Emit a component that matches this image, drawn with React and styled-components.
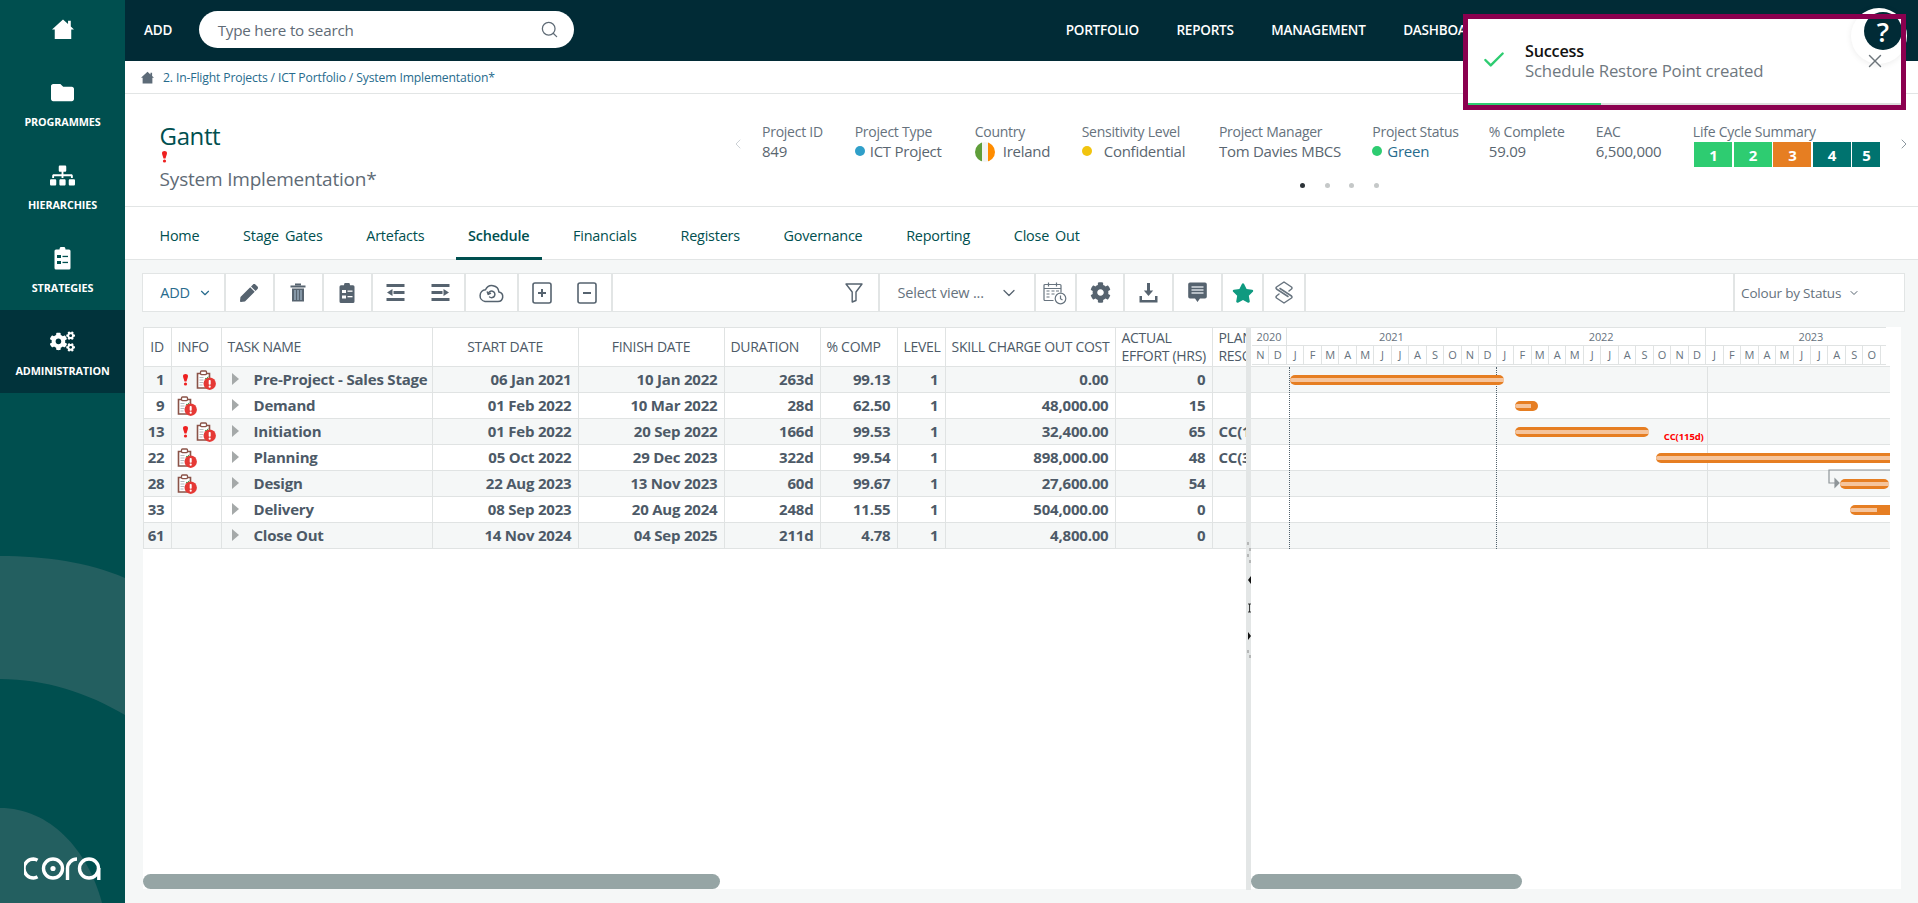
import React from 'react'
import styled, { createGlobalStyle } from 'styled-components'
import { FaFolder, FaSitemap, FaCogs, FaPen, FaCog, FaStar } from 'react-icons/fa'
import { Search, X, Check, ChevronDown, ChevronLeft, ChevronRight } from 'lucide-react'

const GlobalStyle = createGlobalStyle`
  html, body { margin: 0; padding: 0; background: #f5f7f7; }
  body { font-family: "Open Sans", "Noto Sans", sans-serif; overflow: hidden; }
  * { box-sizing: border-box; }
`

const Page = styled.div`
  width: 1918px;
  height: 903px;
  display: flex;
  overflow: hidden;
  position: relative;
`

/* sidebar */
const Sidebar = styled.aside`
  flex: 0 0 125px;
  background: #004f4f;
  position: relative;
  overflow: hidden;
`
const SideArt = styled.svg`
  position: absolute;
  left: 0;
  top: 0;
`
const SideHome = styled.div`
  height: 61px;
  display: flex;
  align-items: center;
  justify-content: center;
  color: #fff;
  position: relative;
  padding-bottom: 3px;
`
const SideItem = styled.div`
  height: 83px;
  padding-top: 21px;
  display: flex;
  flex-direction: column;
  align-items: center;
  color: #fff;
  position: relative;
  background: ${p => (p.$active ? '#01333b' : 'transparent')};
`
const SideIcon = styled.div`
  height: 20px;
  display: flex;
  align-items: center;
  justify-content: center;
`
const SideLabel = styled.span`
  margin-top: 13px;
  font-size: 10.8px;
  line-height: 14px;
  font-weight: 700;
  letter-spacing: -0.1px;
`
const LogoWrap = styled.div`
  position: absolute;
  left: 24px;
  bottom: 23px;
  line-height: 0;
`

/* main column */
const Main = styled.main`
  flex: 1;
  min-width: 0;
  display: flex;
  flex-direction: column;
`
const TopBar = styled.header`
  height: 61px;
  flex: none;
  background: #012b36;
  display: flex;
  align-items: center;
  padding: 0 0 2px 19px;
  color: #fff;
  overflow: hidden;
`
const TopAdd = styled.span`
  font-size: 13.5px;
  font-weight: 600;
  letter-spacing: -0.2px;
`
const SearchPill = styled.div`
  margin-left: 26.5px;
  width: 375px;
  height: 37px;
  background: #fff;
  border-radius: 19px;
  display: flex;
  align-items: center;
  justify-content: space-between;
  padding: 0 15px 0 19px;
  font-size: 15.2px;
  color: #5f6b76;
  letter-spacing: -0.2px;
`
const TopNav = styled.nav`
  margin-left: 492px;
  display: flex;
  gap: 37.5px;
  font-size: 13.5px;
  font-weight: 600;
  letter-spacing: -0.2px;
  white-space: nowrap;
`
const Breadcrumb = styled.div`
  height: 33px;
  flex: none;
  background: #fff;
  padding: 1px 0 0 16px;
  display: flex;
  align-items: center;
  gap: 9px;
  font-size: 12.2px;
  letter-spacing: -0.15px;
  color: #276b8d;
  border-bottom: 1px solid #e2e5e5;
  svg { color: #5d6b78; }
`
const ProjectHeader = styled.section`
  height: 113px;
  flex: none;
  background: #fff;
  border-bottom: 1px solid #e2e5e5;
  display: flex;
`
const TitleBlock = styled.div`
  flex: 0 0 605px;
  padding: 27px 0 0 34.6px;
`
const Title = styled.div`
  font-size: 24px;
  line-height: 30px;
  color: #004f4f;
  letter-spacing: -0.4px;
`
const TitleFlag = styled.div`
  height: 14px;
  padding-left: 1px;
  line-height: 0;
`
const SubTitle = styled.div`
  font-size: 19px;
  line-height: 28px;
  color: #5f6b76;
  letter-spacing: -0.2px;
`
const CarouselArrow = styled.div`
  flex: none;
  width: 16px;
  margin-top: 40px;
  height: 20px;
  color: ${p => p.$color};
  display: flex;
  align-items: center;
  justify-content: center;
`
const Carousel = styled.div`
  flex: none;
  margin-left: 16px;
  padding-top: 28px;
  width: 1121px;
  margin-right: 13px;
`
const InfoGrid = styled.div`
  display: grid;
  grid-template-columns: 92.7px 120px 107px 137.2px 153.4px 116.6px 107px 97px 190px;
`
const InfoLabel = styled.div`
  font-size: 14px;
  line-height: 20px;
  color: #66727d;
  letter-spacing: -0.25px;
  white-space: nowrap;
`
const InfoValue = styled.div`
  font-size: 15px;
  line-height: 18px;
  height: 20px;
  color: ${p => p.$color || '#5a6670'};
  letter-spacing: -0.25px;
  display: flex;
  align-items: flex-start;
  white-space: nowrap;
`
const Dot = styled.span`
  width: 10px;
  height: 10px;
  margin-top: 4px;
  border-radius: 50%;
  background: ${p => p.$color};
  margin-right: ${p => p.$gap}px;
  flex: none;
`
const Flag = styled.span`
  width: 20px;
  height: 20px;
  border-radius: 50%;
  margin-right: 8px;
  background: linear-gradient(90deg, #5f9e3a 0 34%, #f3f3f3 34% 66%, #ff8c00 66%);
`
const LifeCycle = styled.div`
  display: flex;
  gap: 1.5px;
  margin: 0 0 0 1.6px;
  height: 25px;
`
const LifeBox = styled.span`
  width: ${p => p.$w}px;
  height: 25px;
  background: ${p => p.$color};
  color: #fff;
  font-size: 15px;
  font-weight: 700;
  display: flex;
  align-items: center;
  justify-content: center;
`
const Dots = styled.div`
  display: flex;
  gap: 19.6px;
  margin: 16px 0 0 538px;
`
const PageDot = styled.span`
  width: 5px;
  height: 5px;
  border-radius: 50%;
  background: ${p => (p.$on ? '#2c3338' : '#c5c8c8')};
`
const Tabs = styled.nav`
  height: 53px;
  flex: none;
  background: #fff;
  border-bottom: 1px solid #e2e5e5;
  display: flex;
  padding-left: 22px;
  gap: 18.7px;
  word-spacing: 2.5px;
`
const Tab = styled.a`
  height: 53px;
  padding: 3px 12.5px 0;
  font-size: 14.4px;
  letter-spacing: -0.2px;
  line-height: 52px;
  color: #004f4f;
  font-weight: ${p => (p.$active ? 600 : 400)};
  border-bottom: 3px solid ${p => (p.$active ? '#004f4f' : 'transparent')};
`
const Content = styled.div`
  flex: 1;
  min-height: 0;
  padding: 13px 13.5px 0 16.5px;
  display: flex;
  flex-direction: column;
`

/* toolbar */
const Toolbar = styled.div`
  height: 39px;
  flex: none;
  display: flex;
  background: #fff;
  border: 1px solid #e2e5e5;
  color: #56636f;
`
const ToolCell = styled.div`
  flex: 0 0 ${p => p.$w}px;
  border-right: ${p => (p.$last ? 0 : 2)}px solid #e2e5e5;
  display: flex;
  align-items: center;
  justify-content: ${p => p.$justify || 'center'};
  gap: ${p => p.$gap || 0}px;
  padding: ${p => p.$pad || 0};
  white-space: nowrap;
`
const AddLink = styled.span`
  color: #276b8d;
  font-size: 14.5px;
  letter-spacing: -0.2px;
`
const SelectText = styled.span`
  font-size: ${p => p.$size || 14.5}px;
  letter-spacing: -0.2px;
  color: #66727d;
`

/* schedule panel */
const Panel = styled.div`
  margin: 14.5px 3.5px 0 1px;
  height: 562px;
  flex: none;
  background: #fff;
  display: flex;
`
const Pane = styled.div`
  display: flex;
  flex-direction: column;
  overflow: hidden;
  flex: ${p => (p.$grow ? 1 : `0 0 ${p.$w}px`)};
`
const Grid = styled.table`
  table-layout: fixed;
  border-collapse: collapse;
  width: 1103px;
  color: #4d5a67;
`
const HeadCell = styled.th`
  height: 39.5px;
  padding: 0 ${p => (p.$center ? 0 : 6)}px;
  text-align: ${p => (p.$center ? 'center' : 'left')};
  font-weight: 400;
  font-size: 14px;
  line-height: 18px;
  letter-spacing: -0.3px;
  border: 1px solid #e0e3e3;
  overflow: hidden;
  white-space: nowrap;
`
const Row = styled.tr`
  background: ${p => (p.$odd ? '#f5f7f7' : '#fff')};
`
const Cell = styled.td`
  height: 26px;
  padding: 0 ${p => (p.$left ? 0 : 6)}px 2px ${p => (p.$left ? 6 : 0)}px;
  text-align: ${p => (p.$left ? 'left' : 'right')};
  font-size: 15px;
  font-weight: 700;
  letter-spacing: -0.2px;
  border: 1px solid #e0e3e3;
  overflow: hidden;
  white-space: nowrap;
`
const InfoCell = styled.td`
  height: 26px;
  padding: 0;
  border: 1px solid #e0e3e3;
`
const InfoIcons = styled.div`
  display: flex;
  align-items: center;
  gap: ${p => (p.$both ? 7 : 0)}px;
  padding-left: ${p => (p.$both ? 10 : 5)}px;
`
const TaskCell = styled.td`
  height: 26px;
  padding: 0 0 2px;
  border: 1px solid #e0e3e3;
  font-size: 15px;
  font-weight: 700;
  letter-spacing: -0.2px;
  white-space: nowrap;
  overflow: hidden;
`
const TaskInner = styled.div`
  display: flex;
  align-items: center;
  gap: 15px;
  padding-left: 10px;
`
const Caret = styled.span`
  flex: none;
  width: 0;
  height: 0;
  border-left: 7px solid #a5a9a9;
  border-top: 6px solid transparent;
  border-bottom: 6px solid transparent;
`
const ScrollThumb = styled.div`
  flex: none;
  margin-top: auto;
  width: ${p => p.$w}px;
  height: 15px;
  background: #96a5a5;
  border-radius: 8px;
`
const Splitter = styled.div`
  flex: 0 0 5.5px;
  height: 563px;
  background: #e3e6e6;
  position: relative;
`
const SplitMarks = styled.svg`
  position: absolute;
  left: 1px;
  top: 215px;
`

/* gantt */
const Timeline = styled.div`
  width: 635px;
  padding-left: 1px;
  color: #66727d;
  border-top: 1px solid #e0e3e3;
  height: 38px;
  flex: none;
  overflow: hidden;
`
const TimeRow = styled.div`
  display: flex;
  height: ${p => p.$h}px;
  border-bottom: 1px solid #e0e3e3;
`
const TimeCell = styled.div`
  flex: 0 0 ${p => p.$w}px;
  border-right: 1px solid #e0e3e3;
  font-size: 11px;
  letter-spacing: -0.1px;
  display: flex;
  align-items: center;
  justify-content: center;
`
const GanttBody = styled.div`
  width: 638.5px;
  position: relative;
  overflow: hidden;
  margin-top: 1.5px;
  border-top: 1px solid #e0e3e3;
`
const GanttRow = styled.div`
  height: 26px;
  border-bottom: 1px solid #e0e3e3;
  background: ${p => (p.$odd ? '#f5f7f7' : '#fff')};
`
const GanttLine = styled.div`
  position: absolute;
  top: 0;
  bottom: 0;
  width: 0;
  border-left: 1px ${p => (p.$dotted ? 'dotted #50606c' : 'solid #dfe2e2')};
`
const Bar = styled.div`
  position: absolute;
  height: 10px;
  background: #e67e22;
  border-radius: ${p => (p.$open ? '5px 0 0 5px' : '5px')};
`
const BarFill = styled.div`
  position: absolute;
  left: 0;
  top: 3px;
  height: 4px;
  background: #f5c49c;
  border-radius: 2px 0 0 2px;
`
const BarNote = styled.span`
  position: absolute;
  left: 412.7px;
  top: 63px;
  font-size: 9.5px;
  font-weight: 700;
  color: #f00;
  letter-spacing: -0.1px;
`
const Link = styled.svg`
  position: absolute;
  left: 577px;
  top: 102px;
`

/* toast */
const Toast = styled.div`
  position: absolute;
  left: 1463px;
  top: 14px;
  width: 443px;
  height: 96px;
  background: #fff;
  z-index: 5;
  display: flex;
  align-items: flex-start;
  padding: 27px 0 0 17.5px;
`
const ToastFrame = styled.div`
  position: absolute;
  left: 1463px;
  top: 14px;
  width: 443px;
  height: 96px;
  border: 5px solid #8b004f;
  z-index: 7;
  pointer-events: none;
`
const ToastCheck = styled.div`
  flex: none;
  width: 44.5px;
  margin-top: 6px;
  color: #2ecc71;
  line-height: 0;
`
const ToastTitle = styled.div`
  font-size: 16.2px;
  line-height: 20px;
  font-weight: 600;
  letter-spacing: -0.2px;
  color: #111;
`
const ToastText = styled.div`
  font-size: 16.8px;
  line-height: 20px;
  color: #6f7880;
  letter-spacing: -0.2px;
`
const ToastClose = styled.div`
  position: absolute;
  left: 1864px;
  top: 50px;
  color: #6c747a;
  z-index: 8;
  line-height: 0;
`
const ToastProgress = styled.div`
  position: absolute;
  left: 5px;
  right: 5px;
  bottom: 5px;
  height: 2px;
  background: #ddd;
`
const ToastProgressFill = styled.div`
  height: 2px;
  width: 133px;
  background: #2ecc71;
`
const HelpHalo = styled.div`
  position: absolute;
  left: 1851px;
  top: 8px;
  width: 56px;
  height: 56px;
  border-radius: 50%;
  background: #fff;
  box-shadow: 0 1px 6px rgba(0, 0, 0, 0.08);
  z-index: 6;
  display: flex;
  align-items: center;
  justify-content: center;
  padding: 0 0 10px 8px;
`
const HelpButton = styled.div`
  width: 38px;
  height: 38px;
  border-radius: 50%;
  background: #012b36;
  color: #fff;
  font-size: 27px;
  font-weight: 600;
  padding-top: 1px;
  display: flex;
  align-items: center;
  justify-content: center;
`

/* drawn icons */
const HomeIcon = ({ size }) => (
  <svg width={size} height={size} viewBox="0 0 24 24" fill="currentColor">
    <path d="M12 1.500 17.500 6.500V3H20.500V9.200L24 12.500H21V23H3V12.500H0Z" />
  </svg>
)
const Clipboard = ({ color = 'currentColor' }) => (
  <svg width="17" height="23" viewBox="0 0 17 23" fill={color}>
    <path d="M5.500 2.500a3 3 0 0 1 6 0h3.500a1.500 1.500 0 0 1 1.500 1.500v17a1.500 1.500 0 0 1-1.500 1.500h-13a1.500 1.500 0 0 1-1.500-1.500v-17a1.500 1.500 0 0 1 1.500-1.500z" />
    <g fill="#00504f">
      <rect x="3" y="8" width="4" height="3" />
      <rect x="8.500" y="8.800" width="5.500" height="1.300" />
      <rect x="3" y="14" width="4" height="3" />
      <rect x="8.500" y="14.800" width="5.500" height="1.300" />
    </g>
  </svg>
)
const Exclaim = ({ w = 7, h = 12 }) => (
  <svg width={w} height={h} viewBox="0 0 7 12">
    <path d="M3.500 0C5 0 6 .9 6 2.100c0 1.500-1 3.500-1.500 5.400h-2C2 5.600 1 3.600 1 2.100 1 .9 2 0 3.500 0z" fill="#ee2020" />
    <circle cx="3.500" cy="10" r="1.600" fill="#ee2020" />
  </svg>
)
const TaskAlert = () => (
  <svg width="20" height="20" viewBox="0 0 20 20">
    <path d="M1.500 3.500h12v14.500h-12z" fill="#fff" stroke="#8a5348" strokeWidth="1.600" />
    <rect x="4.500" y="1" width="6" height="3.600" rx="1" fill="#fff" stroke="#8a5348" strokeWidth="1.300" />
    <path d="M3.500 7.500h4M3.500 10h4M3.500 12.500h4M3.500 15h3" stroke="#b5bcc0" strokeWidth="1" />
    <path d="M9 8l1.200 1 2-2.400" stroke="#3aa655" strokeWidth="1" fill="none" />
    <circle cx="13.700" cy="13.700" r="6.200" fill="#e53935" />
    <rect x="12.700" y="10" width="2" height="4.800" rx=".8" fill="#fff" />
    <circle cx="13.700" cy="16.700" r="1.100" fill="#fff" />
  </svg>
)
const TrashIcon = () => (
  <svg width="16" height="19" viewBox="0 0 16 19" fill="currentColor">
    <rect x="0.500" y="2.500" width="15" height="2" />
    <rect x="5" y="0.500" width="6" height="2" />
    <path d="M2 5.500h12v13h-12z" fill="currentColor" />
    <path d="M5 7v10M8 7v10M11 7v10" stroke="#9eb3c4" strokeWidth="1.300" />
  </svg>
)
const ClipList = () => (
  <svg width="16" height="20" viewBox="0 0 16 20" fill="currentColor">
    <path d="M5 2.200a3 3 0 0 1 6 0h3a1.500 1.500 0 0 1 1.500 1.500v14.800a1.500 1.500 0 0 1-1.500 1.500h-12a1.500 1.500 0 0 1-1.500-1.500v-14.800a1.500 1.500 0 0 1 1.500-1.500z" />
    <g fill="#fff">
      <rect x="3" y="7" width="4" height="3" />
      <rect x="8.500" y="7.500" width="5" height="1.300" />
      <rect x="3" y="12.500" width="4" height="3" />
      <rect x="8.500" y="13" width="5" height="1.300" />
    </g>
  </svg>
)
const Indent = ({ flip }) => (
  <svg width="19" height="17" viewBox="0 0 19 17" fill="currentColor">
    <rect x="0.500" y="0" width="18" height="3" />
    <rect x="0.500" y="14" width="18" height="3" />
    {flip ? (
      <>
        <rect x="0.500" y="7" width="11" height="3" />
        <path d="M12.500 5l5.500 3.500-5.500 3.500z" />
      </>
    ) : (
      <>
        <rect x="7.500" y="7" width="11" height="3" />
        <path d="M6.500 5l-5.500 3.500 5.500 3.500z" />
      </>
    )}
  </svg>
)
const CloudRestore = () => (
  <svg width="26" height="20" viewBox="0 0 26 20" fill="none" stroke="currentColor" strokeWidth="1.500" strokeLinecap="round">
    <path d="M7 18.500h13a4.800 4.800 0 0 0 .9-9.500A7 7 0 0 0 7.500 6.800 5.900 5.900 0 0 0 7 18.500z" />
    <path d="M10.300 11a3.300 3.300 0 1 1 1.300 3" />
    <path d="M9.300 9l1 2.300 2.200-1" />
  </svg>
)
const SquareSign = ({ plus }) => (
  <svg width="20" height="22" viewBox="0 0 20 22" fill="none" stroke="currentColor">
    <rect x="1" y="1" width="18" height="20" rx="2" strokeWidth="1.600" />
    <path d={plus ? 'M6 11h8M10 7v8' : 'M6 11h8'} strokeWidth="2" />
  </svg>
)
const FunnelIcon = () => (
  <svg width="18" height="20" viewBox="0 0 18 20" fill="none" stroke="#56636f" strokeWidth="1.400" strokeLinejoin="round">
    <path d="M1 1h16l-6 8v8.500l-3.800 1.500V9z" />
  </svg>
)
const CalendarClock = () => (
  <svg width="24" height="24" viewBox="0 0 24 24" fill="none" stroke="#68747f" strokeWidth="1.200">
    <path d="M10.500 19.500h-8.500a1 1 0 0 1-1-1v-14a1 1 0 0 1 1-1h15a1 1 0 0 1 1 1v7" />
    <path d="M1 7.500h17M5.500 1.500v4M13.500 1.500v4M8 3.500h3" />
    <path d="M3.500 10h3M8.500 10h3M13 10h3M3.500 13h3M8.500 13h3M3.500 16h3" />
    <circle cx="17.500" cy="17.500" r="5.300" />
    <path d="M17.500 14.500v3.200l2 1.300" />
  </svg>
)
const DownloadTray = () => (
  <svg width="19" height="20" viewBox="0 0 19 20" fill="currentColor">
    <rect x="8" y="0" width="3" height="8" />
    <path d="M4.800 7.500h9.400l-4.700 5.500z" />
    <path d="M0.500 13h2.500v4h13v-4h2.500v6.500h-18z" />
  </svg>
)
const CommentBox = () => (
  <svg width="19" height="21" viewBox="0 0 19 21" fill="currentColor">
    <path d="M2 0.500h15a1.800 1.800 0 0 1 1.800 1.800v12.400a1.800 1.800 0 0 1-1.800 1.800h-5l-2.500 3.500-2.500-3.500h-5a1.800 1.800 0 0 1-1.800-1.800v-12.400a1.800 1.800 0 0 1 1.800-1.800z" />
    <path d="M3.500 5h12M3.500 8h12M3.500 11h12" stroke="#d7dde2" strokeWidth="1.600" />
  </svg>
)
const Diamonds = () => (
  <svg width="18" height="23" viewBox="0 0 18 23" fill="none" stroke="#68747f" strokeWidth="1.500" strokeLinejoin="round" strokeLinecap="round">
    <path d="M14 10 16.500 8Q17.500 7 16.500 6L9 1 1.500 6Q.5 7 1.500 8L13 15.500" />
    <path d="M4 13 1.500 15Q.5 16 1.500 17L9 22 16.500 17Q17.500 16 16.500 15L5 7.500" />
  </svg>
)
const CoraLogo = () => (
  <svg width="77" height="23" viewBox="0 0 77 23" fill="none" stroke="#fff" strokeWidth="3.400" strokeLinecap="butt">
    <path d="M13.500 3.300A9.500 9.500 0 0 0 9.500 2 9.500 9.500 0 0 0 9.500 21a9.500 9.500 0 0 0 4-1.300" />
    <circle cx="29" cy="11.500" r="9.500" />
    <circle cx="29" cy="11.500" r="2.600" fill="#fff" stroke="none" />
    <path d="M43.500 23V11.500A9.500 9.500 0 0 1 53 2" />
    <circle cx="65" cy="11.500" r="9.500" />
    <path d="M74.800 11v12" />
  </svg>
)

const months = 'JFMAMJJASOND'.split('')
const MONTH = 17.48
const gridCols = [28, 50, 211, 146, 146, 96, 77, 48, 170, 97, 34]

const tasks = [
  { id: 1, flag: true, alert: true, name: 'Pre-Project - Sales Stage', start: '06 Jan 2021', end: '10 Jan 2022', dur: '263d', pct: '99.13', cost: '0.00', hrs: '0', res: '' },
  { id: 9, alert: true, name: 'Demand', start: '01 Feb 2022', end: '10 Mar 2022', dur: '28d', pct: '62.50', cost: '48,000.00', hrs: '15', res: '' },
  { id: 13, flag: true, alert: true, name: 'Initiation', start: '01 Feb 2022', end: '20 Sep 2022', dur: '166d', pct: '99.53', cost: '32,400.00', hrs: '65', res: 'CC(115d)' },
  { id: 22, alert: true, name: 'Planning', start: '05 Oct 2022', end: '29 Dec 2023', dur: '322d', pct: '99.54', cost: '898,000.00', hrs: '48', res: 'CC(322d)' },
  { id: 28, alert: true, name: 'Design', start: '22 Aug 2023', end: '13 Nov 2023', dur: '60d', pct: '99.67', cost: '27,600.00', hrs: '54', res: '' },
  { id: 33, name: 'Delivery', start: '08 Sep 2023', end: '20 Aug 2024', dur: '248d', pct: '11.55', cost: '504,000.00', hrs: '0', res: '' },
  { id: 61, name: 'Close Out', start: '14 Nov 2024', end: '04 Sep 2025', dur: '211d', pct: '4.78', cost: '4,800.00', hrs: '0', res: '' },
]

// x is measured from the left edge of the gantt pane
const bars = [
  { x: 39, w: 213.7, y: 8, fill: 213.7 },
  { x: 264, w: 23, y: 34, fill: 16 },
  { x: 264, w: 133.6, y: 60, fill: 133.6 },
  { x: 405.4, w: 240, y: 86, fill: 240, open: true },
  { x: 589.4, w: 48.200, y: 112, fill: 48.200 },
  { x: 599, w: 50, y: 138, fill: 27, open: true },
]

const tabs = ['Home', 'Stage Gates', 'Artefacts', 'Schedule', 'Financials', 'Registers', 'Governance', 'Reporting', 'Close Out']
const sideItems = [
  { label: 'PROGRAMMES', icon: <FaFolder size={23} /> },
  { label: 'HIERARCHIES', icon: <FaSitemap size={25} /> },
  { label: 'STRATEGIES', icon: <Clipboard color="#fff" /> },
  { label: 'ADMINISTRATION', icon: <FaCogs size={25} />, active: true },
]

export default function App() {
  return (
    <Page>
      <GlobalStyle />
      <Sidebar>
        <SideArt width="125" height="903" viewBox="0 0 125 903">
          <path d="M0 556C45 556 88 562 125 578V715C88 693 45 679 0 679Z" fill="#235f60" />
          <path d="M0 808C50 808 88 850 102 903H0Z" fill="#235f60" />
        </SideArt>
        <SideHome><HomeIcon size={22} /></SideHome>
        {sideItems.map(item => (
          <SideItem key={item.label} $active={item.active}>
            <SideIcon>{item.icon}</SideIcon>
            <SideLabel>{item.label}</SideLabel>
          </SideItem>
        ))}
        <LogoWrap><CoraLogo /></LogoWrap>
      </Sidebar>

      <Main>
        <TopBar>
          <TopAdd>ADD</TopAdd>
          <SearchPill>
            Type here to search
            <Search size={19} strokeWidth={1.6} />
          </SearchPill>
          <TopNav>
            <span>PORTFOLIO</span>
            <span>REPORTS</span>
            <span>MANAGEMENT</span>
            <span>DASHBOARDS</span>
          </TopNav>
        </TopBar>

        <Breadcrumb>
          <HomeIcon size={13} />
          <span>2. In-Flight Projects / ICT Portfolio / System Implementation*</span>
        </Breadcrumb>

        <ProjectHeader>
          <TitleBlock>
            <Title>Gantt</Title>
            <TitleFlag><Exclaim /></TitleFlag>
            <SubTitle>System Implementation*</SubTitle>
          </TitleBlock>
          <CarouselArrow $color="#c0c6cb"><ChevronLeft size={32} strokeWidth={1.2} /></CarouselArrow>
          <Carousel>
            <InfoGrid>
              <div><InfoLabel>Project ID</InfoLabel><InfoValue>849</InfoValue></div>
              <div><InfoLabel>Project Type</InfoLabel><InfoValue><Dot $color="#2f9fc9" $gap={5} />ICT Project</InfoValue></div>
              <div><InfoLabel>Country</InfoLabel><InfoValue><Flag />Ireland</InfoValue></div>
              <div><InfoLabel>Sensitivity Level</InfoLabel><InfoValue><Dot $color="#f1c40f" $gap={12} />Confidential</InfoValue></div>
              <div><InfoLabel>Project Manager</InfoLabel><InfoValue>Tom Davies MBCS</InfoValue></div>
              <div><InfoLabel>Project Status</InfoLabel><InfoValue $color="#276b8d"><Dot $color="#2ecc71" $gap={5} />Green</InfoValue></div>
              <div><InfoLabel>% Complete</InfoLabel><InfoValue>59.09</InfoValue></div>
              <div><InfoLabel>EAC</InfoLabel><InfoValue>6,500,000</InfoValue></div>
              <div>
                <InfoLabel>Life Cycle Summary</InfoLabel>
                <LifeCycle>
                  <LifeBox $w={38} $color="#2ecc71">1</LifeBox>
                  <LifeBox $w={38} $color="#2ecc71">2</LifeBox>
                  <LifeBox $w={38} $color="#e67e22">3</LifeBox>
                  <LifeBox $w={38} $color="#00736f">4</LifeBox>
                  <LifeBox $w={28} $color="#00736f">5</LifeBox>
                </LifeCycle>
              </div>
            </InfoGrid>
            <Dots>
              <PageDot $on /><PageDot /><PageDot /><PageDot />
            </Dots>
          </Carousel>
          <CarouselArrow $color="#6f7c87"><ChevronRight size={32} strokeWidth={1.2} /></CarouselArrow>
        </ProjectHeader>

        <Tabs>
          {tabs.map(t => <Tab key={t} $active={t === 'Schedule'}>{t}</Tab>)}
        </Tabs>

        <Content>
          <Toolbar>
            <ToolCell $w={83} $gap={8} $pad="0 0 0 6px"><AddLink>ADD</AddLink><ChevronDown size={14} color="#276b8d" /></ToolCell>
            <ToolCell $w={49}><FaPen size={18} /></ToolCell>
            <ToolCell $w={49}><TrashIcon /></ToolCell>
            <ToolCell $w={49}><ClipList /></ToolCell>
            <ToolCell $w={93} $gap={26}><Indent /><Indent flip /></ToolCell>
            <ToolCell $w={53}><CloudRestore /></ToolCell>
            <ToolCell $w={94} $gap={25}><SquareSign plus /><SquareSign /></ToolCell>
            <ToolCell $w={267} $justify="flex-end" $pad="0 15px 0 0"><FunnelIcon /></ToolCell>
            <ToolCell $w={156} $justify="space-between" $pad="0 15px 0 18px"><SelectText>Select view ...</SelectText><ChevronDown size={20} strokeWidth={1.5} /></ToolCell>
            <ToolCell $w={41.6}><CalendarClock /></ToolCell>
            <ToolCell $w={48}><FaCog size={21} /></ToolCell>
            <ToolCell $w={49}><DownloadTray /></ToolCell>
            <ToolCell $w={49}><CommentBox /></ToolCell>
            <ToolCell $w={41}><FaStar size={22} color="#0f9a80" /></ToolCell>
            <ToolCell $w={42}><Diamonds /></ToolCell>
            <ToolCell $w={429} />
            <ToolCell $w={167} $last $justify="flex-start" $gap={7} $pad="0 0 0 6px">
              <SelectText $size={13.5}>Colour by Status</SelectText><ChevronDown size={12} />
            </ToolCell>
          </Toolbar>

          <Panel>
            <Pane $w={1103}>
              <Grid>
                <colgroup>
                  {gridCols.map((w, i) => <col key={i} style={{ width: w }} />)}
                </colgroup>
                <thead>
                  <tr>
                    <HeadCell $center>ID</HeadCell>
                    <HeadCell>INFO</HeadCell>
                    <HeadCell>TASK NAME</HeadCell>
                    <HeadCell $center>START DATE</HeadCell>
                    <HeadCell $center>FINISH DATE</HeadCell>
                    <HeadCell>DURATION</HeadCell>
                    <HeadCell>% COMP</HeadCell>
                    <HeadCell>LEVEL</HeadCell>
                    <HeadCell>SKILL CHARGE OUT COST</HeadCell>
                    <HeadCell>ACTUAL<br />EFFORT (HRS)</HeadCell>
                    <HeadCell>PLANNED<br />RESOURCES</HeadCell>
                  </tr>
                </thead>
                <tbody>
                  {tasks.map((t, i) => (
                    <Row key={t.id} $odd={i % 2 === 0}>
                      <Cell>{t.id}</Cell>
                      <InfoCell>
                        <InfoIcons $both={t.flag}>
                          {t.flag && <Exclaim />}
                          {t.alert && <TaskAlert />}
                        </InfoIcons>
                      </InfoCell>
                      <TaskCell>
                        <TaskInner><Caret />{t.name}</TaskInner>
                      </TaskCell>
                      <Cell>{t.start}</Cell>
                      <Cell>{t.end}</Cell>
                      <Cell>{t.dur}</Cell>
                      <Cell>{t.pct}</Cell>
                      <Cell>1</Cell>
                      <Cell>{t.cost}</Cell>
                      <Cell>{t.hrs}</Cell>
                      <Cell $left>{t.res}</Cell>
                    </Row>
                  ))}
                </tbody>
              </Grid>
              <ScrollThumb $w={577} />
            </Pane>

            <Splitter>
              <SplitMarks width="5" height="120" viewBox="0 0 5 120">
                <path d="M4 34v8l-3-4zM1 90v8l3-4z" fill="#111" stroke="none" />
                <path d="M1 62h3M1 70h3M2.500 62v8" stroke="#111" strokeWidth=".8" />
                <path d="M1 0v3M3 6v3M1 12v3M3 18v3M1 108v3M3 113v3" stroke="#888" strokeWidth="1" />
              </SplitMarks>
            </Splitter>

            <Pane $grow>
              <Timeline>
                <TimeRow $h={18}>
                  <TimeCell $w={MONTH * 2}>2020</TimeCell>
                  <TimeCell $w={MONTH * 12}>2021</TimeCell>
                  <TimeCell $w={MONTH * 12}>2022</TimeCell>
                  <TimeCell $w={MONTH * 12}>2023</TimeCell>
                </TimeRow>
                <TimeRow $h={19}>
                  {['N', 'D', ...months, ...months, ...months.slice(0, 10)].map((m, i) => (
                    <TimeCell key={i} $w={MONTH}>{m}</TimeCell>
                  ))}
                </TimeRow>
              </Timeline>
              <GanttBody>
                {tasks.map((t, i) => <GanttRow key={t.id} $odd={i % 2 === 0} />)}
                <GanttLine $dotted style={{ left: 38 }} />
                <GanttLine $dotted style={{ left: 245 }} />
                <GanttLine style={{ left: 455.6 }} />
                {bars.map(b => (
                  <Bar key={b.y} $open={b.open} style={{ left: b.x, width: b.w, top: b.y }}>
                    <BarFill style={{ width: b.fill }} />
                  </Bar>
                ))}
                <BarNote>CC(115d)</BarNote>
                <Link width="62" height="22" viewBox="0 0 62 22" fill="none" stroke="#8f9699" strokeWidth="1.200">
                  <path d="M62 1H1v13h8" />
                  <path d="M7 10l4 4-4 4z" fill="#8f9699" />
                </Link>
              </GanttBody>
              <ScrollThumb $w={271} />
            </Pane>
          </Panel>
        </Content>
      </Main>

      <Toast>
        <ToastCheck><Check size={26} strokeWidth={2.2} /></ToastCheck>
        <div>
          <ToastTitle>Success</ToastTitle>
          <ToastText>Schedule Restore Point created</ToastText>
        </div>
        <ToastProgress><ToastProgressFill /></ToastProgress>
      </Toast>
      <HelpHalo><HelpButton>?</HelpButton></HelpHalo>
      <ToastClose><X size={22} strokeWidth={1.5} /></ToastClose>
      <ToastFrame />
    </Page>
  )
}
